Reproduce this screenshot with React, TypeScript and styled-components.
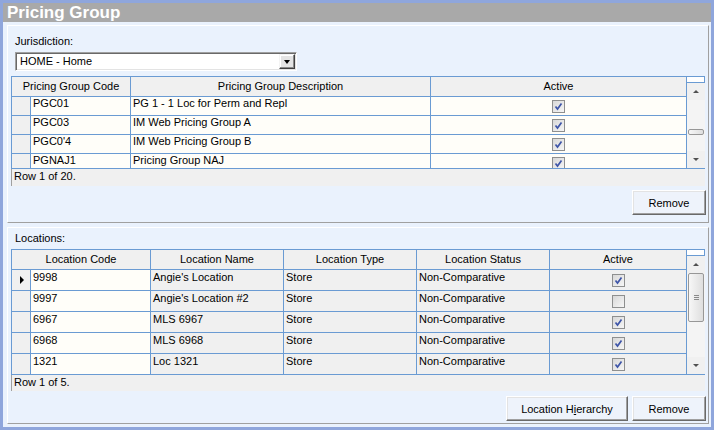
import React from "react";
import styled, {createGlobalStyle} from "styled-components";

const GlobalStyle = createGlobalStyle`
  html, body {
    margin: 0;
    padding: 0;
  }

  body {
    font-family: "Liberation Sans", Arial, sans-serif;
    font-size: 11px;
    color: #000;
    background: #fff;
  }

  * {
    box-sizing: border-box;
  }
`

const GRID_LINE = "#6a9bd3"

const Window = styled.div`
  width: 714px;
  height: 430px;
  border: 3px solid #8fa6dc;
  background: #eaf2fd;
  display: flex;
  flex-direction: column;
`

const TitleBar = styled.header`
  height: 19px;
  flex: none;
  padding-left: 4px;
  background: #a9a9a9;
  color: #fff;
  font-size: 17px;
  font-weight: bold;
  line-height: 19px;
`

const Body = styled.div`
  flex: 1;
  display: flex;
  flex-direction: column;
  gap: 4px;
  padding: 3px 2px 3px 4px;
`

const Panel = styled.section<{$height: number}>`
  height: ${p => p.$height}px;
  flex: none;
  display: flex;
  flex-direction: column;
  padding: 0 3px;
  border-top: 1px solid #fff;
  border-left: 1px solid #fff;
  border-right: 1px solid #a0a0a0;
  border-bottom: 1px solid #a0a0a0;
`

const Label = styled.div<{$top: number; $bottom?: number}>`
  margin-top: ${p => p.$top}px;
  margin-bottom: ${p => p.$bottom ?? 0}px;
  padding-left: 4px;
  line-height: 13px;
`

const Select = styled.div`
  width: 282px;
  height: 19px;
  margin: 4px 0 5px 4px;
  display: flex;
  align-items: stretch;
  background: #fff;
  border: 1px solid;
  border-color: #a0a0a0 #fff #fff #a0a0a0;
  box-shadow: inset 1px 1px #696969, inset -1px -1px #e3e3e3;
  padding: 1px;
`

const SelectText = styled.div`
  flex: 1;
  padding-left: 3px;
  line-height: 15px;
`

const DropButton = styled.div`
  width: 16px;
  display: flex;
  justify-content: center;
  align-items: center;
  background: #e4e4e4;
  border: 1px solid;
  border-color: #f4f4f4 #404040 #404040 #f4f4f4;
  box-shadow: inset -1px -1px #8a8a8a, inset 1px 1px #fff;
`

const DropArrow = styled.span`
  width: 1px;
  height: 0;
  border-left: 3px solid transparent;
  border-right: 3px solid transparent;
  border-top: 4px solid #000;
`

const GridFrame = styled.div<{$height: number}>`
  width: 694px;
  height: ${p => p.$height}px;
  flex: none;
  display: flex;
  overflow: hidden;
  border-top: 1px solid ${GRID_LINE};
  border-left: 1px solid ${GRID_LINE};
  border-bottom: 1px solid ${GRID_LINE};
`

const TableArea = styled.div`
  width: 675px;
  flex: none;
  overflow: hidden;
`

const HeaderRow = styled.div`
  height: 20px;
  display: flex;
`

const HeaderCell = styled.div<{$width: number}>`
  width: ${p => p.$width}px;
  flex: none;
  display: flex;
  justify-content: center;
  align-items: center;
  line-height: 13px;
  background: #f0f0f0;
  border-right: 1px solid ${GRID_LINE};
  border-bottom: 1px solid ${GRID_LINE};
  white-space: nowrap;
`

const DataRow = styled.div<{$height: number}>`
  height: ${p => p.$height}px;
  flex: none;
  display: flex;
`

const RowHeader = styled.div`
  width: 19px;
  flex: none;
  display: flex;
  justify-content: center;
  align-items: center;
  padding-left: 2px;
  background: #f0f0f0;
  border-right: 1px solid ${GRID_LINE};
  border-bottom: 1px solid ${GRID_LINE};
`

const RowArrow = styled.span`
  width: 0;
  height: 0;
  border-top: 4px solid transparent;
  border-bottom: 4px solid transparent;
  border-left: 4px solid #000;
`

const DataCell = styled.div<{$width: number; $gray?: boolean; $padTop: number; $center?: boolean}>`
  width: ${p => p.$width}px;
  flex: none;
  display: flex;
  align-items: ${p => p.$center ? "center" : "flex-start"};
  justify-content: ${p => p.$center ? "center" : "flex-start"};
  padding: ${p => p.$center ? "0" : `${p.$padTop}px 0 0 2px`};
  line-height: 13px;
  white-space: nowrap;
  overflow: hidden;
  background: ${p => p.$gray ? "#f0f0f0" : "#fffef9"};
  border-right: 1px solid ${GRID_LINE};
  border-bottom: 1px solid ${GRID_LINE};
`

const CheckBox = styled.span`
  width: 13px;
  height: 13px;
  display: flex;
  justify-content: center;
  align-items: center;
  border: 1px solid #8e8f8f;
  background: linear-gradient(135deg, #d8d8d8, #f6f6f6);
`

const ScrollBar = styled.div`
  width: 18px;
  flex: none;
  display: flex;
  flex-direction: column;
  background: #f0f0f0;
`

const ScrollCap = styled.div`
  height: 6px;
  flex: none;
  background: #fff;
  border-bottom: 1px solid ${GRID_LINE};
  border-right: 1px solid ${GRID_LINE};
`

const ScrollButton = styled.div`
  height: 17px;
  flex: none;
  display: flex;
  justify-content: center;
  align-items: center;
`

const ScrollArrow = styled.span<{$down?: boolean}>`
  width: 1px;
  height: 0;
  border-left: 3px solid transparent;
  border-right: 3px solid transparent;
  ${p => p.$down ? "border-top: 3px solid #505050;" : "border-bottom: 3px solid #505050;"}
`

const ScrollTrack = styled.div`
  flex: 1;
  display: flex;
  flex-direction: column;
  padding: 0 1px;
  background: #f4f4f4;
`

const Thumb = styled.div<{$top: number; $height: number}>`
  margin-top: ${p => p.$top}px;
  height: ${p => p.$height}px;
  flex: none;
  display: flex;
  flex-direction: column;
  justify-content: center;
  align-items: center;
  gap: 1px;
  border: 1px solid #979797;
  border-radius: 2px;
  background: linear-gradient(to right, #f7f7f7, #dedede);
`

const Grip = styled.span`
  width: 5px;
  height: 1px;
  background: #8a8a8a;
`

const StatusBar = styled.div<{$height: number}>`
  width: 694px;
  height: ${p => p.$height}px;
  flex: none;
  padding-left: 2px;
  line-height: 14px;
  background: #f0f0f0;
  border-left: 1px solid #a0a0a0;
`

const ButtonRow = styled.div<{$top: number}>`
  margin: ${p => p.$top}px -1px 0 0;
  display: flex;
  justify-content: flex-end;
  gap: 4px;
`

const Button = styled.button<{$width: number}>`
  width: ${p => p.$width}px;
  height: 25px;
  padding: 0;
  font-family: "Liberation Sans", Arial, sans-serif;
  font-size: 11px;
  color: #000;
  background: #eef3fb;
  border: 1px solid;
  border-color: #fff #696969 #696969 #fff;
  box-shadow: inset -1px -1px #a0a0a0, inset 1px 1px #e3e3e3;
`

type Cell = string | boolean

interface Column {
  title: string;
  width: number;
  readOnly?: boolean;
}

interface GridProps {
  columns: Column[];
  rows: Cell[][];
  rowHeight: number;
  height: number;
  thumbTop: number;
  thumbHeight: number;
  grip?: boolean;
  currentRow?: number;
}

const Check = ({checked}: { checked: boolean }) => (
  <CheckBox>
    {checked &&
    <svg width="9" height="9" viewBox="0 0 9 9">
      <polyline points="1.5,4.5 3.5,7 7.5,1.5" fill="none" stroke="#3e55a8" strokeWidth="1.7"/>
    </svg>
    }
  </CheckBox>
)

const Grid = ({columns, rows, rowHeight, height, thumbTop, thumbHeight, grip, currentRow}: GridProps) => {
  const padTop = Math.floor((rowHeight - 19) / 2)

  return (
    <GridFrame $height={height}>
      <TableArea>
        <HeaderRow>
          {columns.map((col, i) => (
            <HeaderCell key={col.title} $width={i === 0 ? col.width + 19 : col.width}>{col.title}</HeaderCell>
          ))}
        </HeaderRow>
        {rows.map((row, ri) => (
          <DataRow key={ri} $height={rowHeight}>
            <RowHeader>{ri === currentRow && <RowArrow/>}</RowHeader>
            {columns.map((col, ci) => {
              const value = row[ci]
              return typeof value === "boolean"
                ? <DataCell key={ci} $width={col.width} $gray={col.readOnly} $padTop={padTop} $center><Check checked={value}/></DataCell>
                : <DataCell key={ci} $width={col.width} $gray={col.readOnly} $padTop={padTop}>{value}</DataCell>
            })}
          </DataRow>
        ))}
      </TableArea>
      <ScrollBar>
        <ScrollCap/>
        <ScrollButton><ScrollArrow/></ScrollButton>
        <ScrollTrack>
          <Thumb $top={thumbTop} $height={thumbHeight}>
            {grip && <><Grip/><Grip/><Grip/></>}
          </Thumb>
        </ScrollTrack>
        <ScrollButton><ScrollArrow $down/></ScrollButton>
      </ScrollBar>
    </GridFrame>
  )
}

const pricingColumns: Column[] = [
  {title: "Pricing Group Code", width: 100},
  {title: "Pricing Group Description", width: 300},
  {title: "Active", width: 256},
]

const pricingRows: Cell[][] = [
  ["PGC01", "PG 1 - 1 Loc for Perm and Repl", true],
  ["PGC03", "IM Web Pricing Group A", true],
  ["PGC0'4", "IM Web Pricing Group B", true],
  ["PGNAJ1", "Pricing Group NAJ", true],
]

const locationColumns: Column[] = [
  {title: "Location Code", width: 120},
  {title: "Location Name", width: 133, readOnly: true},
  {title: "Location Type", width: 133, readOnly: true},
  {title: "Location Status", width: 133, readOnly: true},
  {title: "Active", width: 137, readOnly: true},
]

const locationRows: Cell[][] = [
  ["9998", "Angie's Location", "Store", "Non-Comparative", true],
  ["9997", "Angie's Location #2", "Store", "Non-Comparative", false],
  ["6967", "MLS 6967", "Store", "Non-Comparative", true],
  ["6968", "MLS 6968", "Store", "Non-Comparative", true],
  ["1321", "Loc 1321", "Store", "Non-Comparative", true],
]

const App = () => {
  return (
    <>
      <GlobalStyle/>
      <Window>
        <TitleBar>Pricing Group</TitleBar>
        <Body>
          <Panel $height={198}>
            <Label $top={9}>Jurisdiction:</Label>
            <Select>
              <SelectText>HOME - Home</SelectText>
              <DropButton><DropArrow/></DropButton>
            </Select>
            <Grid columns={pricingColumns} rows={pricingRows} rowHeight={19} height={93}
                  thumbTop={29} thumbHeight={6}/>
            <StatusBar $height={17}>Row 1 of 20.</StatusBar>
            <ButtonRow $top={4}>
              <Button $width={74}>Remove</Button>
            </ButtonRow>
          </Panel>
          <Panel $height={197}>
            <Label $top={4} $bottom={4}>Locations:</Label>
            <Grid columns={locationColumns} rows={locationRows} rowHeight={21} height={126}
                  thumbTop={0} thumbHeight={49} grip currentRow={0}/>
            <StatusBar $height={16}>Row 1 of 5.</StatusBar>
            <ButtonRow $top={5}>
              <Button $width={122}>Location H<u>i</u>erarchy</Button>
              <Button $width={74}>Remove</Button>
            </ButtonRow>
          </Panel>
        </Body>
      </Window>
    </>
  )
}

export default App;
